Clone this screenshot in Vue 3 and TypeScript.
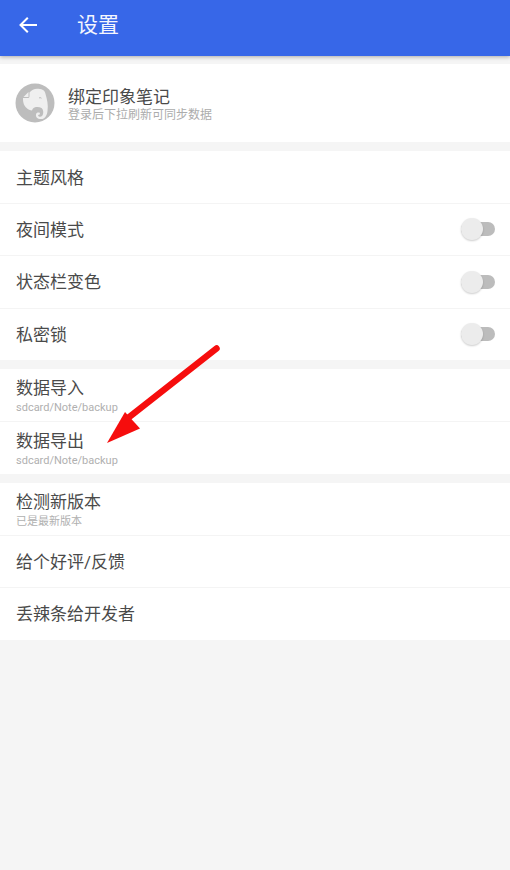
<script setup lang="ts">
interface Row { title: string; sub?: string; toggle?: boolean }
const groups: Row[][] = [
  [
    { title: '主题风格' },
    { title: '夜间模式', toggle: true },
    { title: '状态栏变色', toggle: true },
    { title: '私密锁', toggle: true },
  ],
  [
    { title: '数据导入', sub: 'sdcard/Note/backup' },
    { title: '数据导出', sub: 'sdcard/Note/backup' },
  ],
  [
    { title: '检测新版本', sub: '已是最新版本' },
    { title: '给个好评/反馈' },
    { title: '丢辣条给开发者' },
  ],
]
</script>

<template>
  <div class="page">
    <header class="bar">
      <svg class="back" width="24" height="24" viewBox="0 0 24 24">
        <path d="M21 12H5M11.8 4.7 4.5 12l7.3 7.3" fill="none" stroke="#fff" stroke-width="2" />
      </svg>
      <span class="bar-title">设置</span>
    </header>

    <section class="card account">
      <div class="avatar">
        <svg width="40" height="40" viewBox="0 0 40 40">
          <circle cx="20" cy="20" r="19.5" fill="#bdbdbd" />
          <path d="M8.5 14 13.5 9V14Z" fill="#efefef" />
          <path d="M14.5 9.5C17 6 21 5 25 6c4 .5 5 2.5 5.5 5 1.5 5 3 11 2 17-.5 5-3 8.500-7 8-3 0-5-2-4.500-4.500.3-2 2.500-2.500 4-1.500l-.5 1.800c-1-.3-1.500.2-1.300 1 .6 1.200 2.800 1.400 3.800.2 2-2 1.500-6.500-.5-8-2-1.200-5-1.200-7-.5-1.500.5-2 1.500-2.500 3-4-.5-7.500-3.500-8.500-7.500-.5-2-.5-3.500-.5-5h4.500c1.500 0 2-.5 2-2Z" fill="#efefef" />
          <path d="M24 14.500c1.300-.6 2.600 0 3 1.200-1-.4-2-.4-3-.2Z" fill="#bdbdbd" />
        </svg>
      </div>
      <div class="account-text">
        <div class="account-title">绑定印象笔记</div>
        <div class="account-sub">登录后下拉刷新可同步数据</div>
      </div>
    </section>

    <section v-for="(group, g) in groups" :key="g" class="card group">
      <div v-for="row in group" :key="row.title" class="row">
        <div class="row-text">
          <div class="row-title">{{ row.title }}</div>
          <div v-if="row.sub" class="row-sub">{{ row.sub }}</div>
        </div>
        <div v-if="row.toggle" class="switch"><span class="knob"></span></div>
      </div>
    </section>

    <svg class="arrow" width="510" height="870" viewBox="0 0 510 870">
      <path d="M216.5 348.5 128 418" stroke="#f60d0d" stroke-width="6.5" stroke-linecap="round" fill="none" />
      <path d="M107 443 125 412 140 428.5Z" fill="#f60d0d" />
    </svg>
  </div>
</template>

<style>
html, body { margin: 0; background: #f5f5f5; }
</style>

<style scoped>
.page {
  position: relative;
  width: 510px;
  height: 870px;
  overflow: hidden;
  background: #f5f5f5;
  font-family: Roboto, "Noto Sans CJK SC", sans-serif;
}
.bar {
  height: 50px;
  padding: 0 0 6px 16px;
  background: #3767e8;
  display: flex;
  align-items: center;
  box-shadow: 0 1px 4px rgba(0, 0, 0, 0.3);
}
.back { flex: none; }
.bar-title {
  margin-left: 37px;
  font-size: 21px;
  line-height: 24px;
  color: #f4f6fe;
}
.card { background: #fff; }
.account {
  margin-top: 8px;
  height: 78px;
  display: flex;
  align-items: center;
  padding-left: 15px;
}
.avatar { width: 40px; height: 40px; }
.account-text { margin-left: 13px; padding-top: 3px; }
.account-title { font-size: 17px; line-height: 20px; color: #4a4a4a; }
.account-sub { font-size: 12px; line-height: 16px; color: #acacac; }
.group { margin-top: 9px; }
.group:last-of-type { margin-top: 9.4px; }
.row {
  height: 52px;
  display: flex;
  align-items: center;
  justify-content: space-between;
  padding: 0 15px 0 16px;
  border-bottom: 1px solid #f4f4f4;
  margin-bottom: -0.6px;
}
.group .row:last-child { border-bottom: 0; margin-bottom: 0; }
.row-text { padding-top: 1px; }
.row-title { font-size: 17px; line-height: 20px; color: #4a4a4a; }
.row-sub { margin: 3px 0 -2px; font-size: 11px; line-height: 14px; color: #b0b0b0; }
.switch {
  position: relative;
  width: 34px;
  height: 14px;
  border-radius: 7px;
  background: #bcbcbc;
}
.knob {
  position: absolute;
  left: 0;
  top: -4px;
  width: 22px;
  height: 22px;
  border-radius: 50%;
  background: #ececec;
  box-shadow: 0 1px 2px rgba(0, 0, 0, 0.2);
}
.arrow { position: absolute; left: 0; top: 0; pointer-events: none; }
</style>
